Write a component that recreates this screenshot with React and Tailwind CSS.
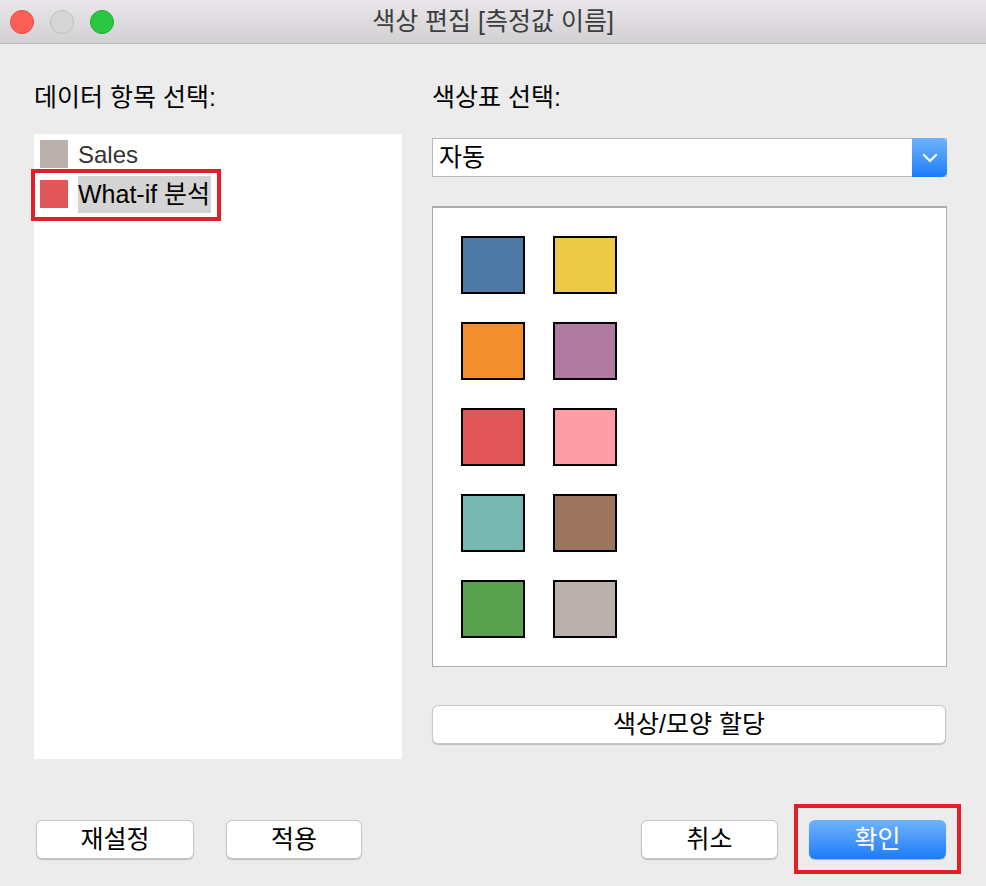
import React from "react";

const font = { fontFamily: '"Liberation Sans", "Noto Sans CJK KR", sans-serif' };

const palette = [
  ["#4e79a7", "#edc948"],
  ["#f28e2b", "#b07aa1"],
  ["#e15759", "#ff9da7"],
  ["#76b7b2", "#9c755f"],
  ["#59a14f", "#bab0ac"],
];

function TitleBar() {
  return (
    <div className="relative flex h-[44px] items-center justify-center border-b border-[#b9b7b9] bg-gradient-to-b from-[#e9e7e9] to-[#d2d0d2]">
      <div className="absolute left-[10px] top-[10px] flex gap-[16px]">
        <span className="h-[24px] w-[24px] rounded-full border border-[#e2463f] bg-[#fe5f57]" />
        <span className="h-[24px] w-[24px] rounded-full border border-[#bdbdbd] bg-[#d6d6d6]" />
        <span className="h-[24px] w-[24px] rounded-full border border-[#1ea933] bg-[#2ac840]" />
      </div>
      <span className="text-[25px] text-[#3d3d3d]">색상 편집 [측정값 이름]</span>
    </div>
  );
}

function Button({ children, className = "", primary }) {
  return (
    <button
      className={
        primary
          ? "flex h-[39px] items-center justify-center rounded-[6px] bg-gradient-to-b from-[#6eb2fb] to-[#167cf9] text-[25px] text-white shadow-[0_1px_1px_rgba(0,0,0,0.25)] " +
            className
          : "flex h-[39px] items-center justify-center rounded-[6px] border border-[#c6c6c6] bg-white text-[25px] text-black shadow-[0_1px_1px_rgba(0,0,0,0.2)] " +
            className
      }
    >
      {children}
    </button>
  );
}

export default function App() {
  return (
    <div className="flex h-[886px] w-[986px] flex-col overflow-hidden bg-[#ececec]" style={font}>
      <TitleBar />

      <div className="flex gap-[30px] pl-[34px] pt-[38px]">
        {/* Left: data items */}
        <div className="flex w-[368px] flex-col">
          <div className="h-[30px] text-[25px] leading-[30px] text-black">데이터 항목 선택:</div>
          <div className="mt-[22px] flex h-[625px] flex-col bg-white pl-[6px] pt-[6px]">
            <div className="flex h-[40px] items-start gap-[10px]">
              <span className="h-[28px] w-[28px] bg-[#bab0ac]" />
              <span className="text-[24px] leading-[30px] text-[#333]">Sales</span>
            </div>
            <div className="relative flex h-[40px] items-start gap-[10px]">
              <span className="h-[28px] w-[28px] bg-[#e15759]" />
              <span className="-mt-[4px] bg-[#d4d4d4] pr-[1px] text-[25px] leading-[37px] text-black">What-if 분석</span>
              <div className="absolute left-[-9px] top-[-11px] h-[52px] w-[190px] border-[4px] border-[#e41e26]" />
            </div>
          </div>
        </div>

        {/* Right: palette */}
        <div className="flex w-[515px] flex-col">
          <div className="h-[30px] text-[25px] leading-[30px] text-black">색상표 선택:</div>
          <div className="mt-[26px] flex h-[39px] border border-[#b8b8b8] bg-white">
            <span className="flex-1 pl-[6px] text-[25px] leading-[37px] text-black">자동</span>
            <span className="-my-px -mr-px flex w-[35px] items-center justify-center rounded-r-[5px] bg-gradient-to-b from-[#6eb2fb] to-[#167cf9]">
              <svg width="16" height="10" viewBox="0 0 16 10" fill="none">
                <path d="M2 2l6 6 6-6" stroke="white" strokeWidth="2.4" strokeLinecap="round" strokeLinejoin="round" />
              </svg>
            </span>
          </div>
          <div className="mt-[29px] flex h-[461px] flex-col gap-[28px] border border-t-2 border-[#ababab] bg-white pl-[28px] pt-[28px]">
            {palette.map((row, i) => (
              <div key={i} className="flex gap-[28px]">
                {row.map((c) => (
                  <span key={c} className="h-[58px] w-[64px] border-2 border-black" style={{ backgroundColor: c }} />
                ))}
              </div>
            ))}
          </div>
          <Button className="mt-[38px] w-[514px]">색상/모양 할당</Button>
        </div>
      </div>

      {/* Bottom buttons */}
      <div className="mt-[61px] flex items-center pl-[36px] pr-[40px]">
        <Button className="w-[158px]">재설정</Button>
        <Button className="ml-[32px] w-[136px]">적용</Button>
        <div className="flex-1" />
        <Button className="w-[137px]">취소</Button>
        <div className="relative ml-[31px]">
          <Button primary className="w-[137px]">확인</Button>
          <div className="absolute left-[-15px] top-[-16px] h-[70px] w-[167px] border-[4px] border-[#e41e26]" />
        </div>
      </div>
    </div>
  );
}
